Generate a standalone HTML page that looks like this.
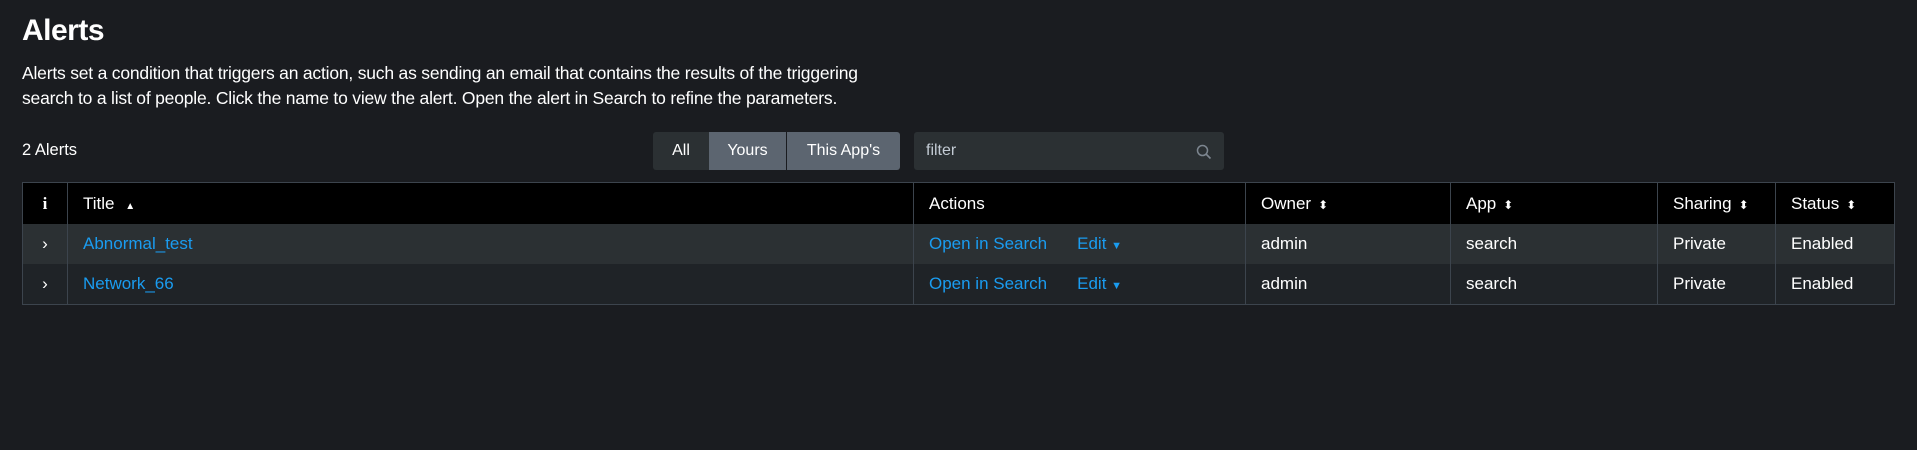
<!DOCTYPE html>
<html><head><meta charset="utf-8"><style>
body{margin:0;width:1917px;height:450px;background:#1a1c20;font-family:"Liberation Sans",sans-serif;color:#fff;overflow:hidden;position:relative}
.a{position:absolute;white-space:nowrap}
h1{position:absolute;left:22px;top:14px;margin:0;font-size:30px;font-weight:bold;letter-spacing:-0.5px}
.desc{left:22px;top:61px;font-size:17.5px;line-height:25px;letter-spacing:-0.2px}
.btn{position:absolute;top:132px;height:38px;line-height:38px;font-size:16px;text-align:center}
table{position:absolute;left:22px;top:182px;width:1873px;border-collapse:collapse;table-layout:fixed;font-size:17px;border:1px solid #3c444d}
td,th{padding:0 0 0 15px;text-align:left;font-weight:normal;height:40px;border-left:1px solid #3c444d;white-space:nowrap;overflow:hidden}
th{background:#000;height:41px}
tr.r1 td{background:#2b3033}
tr.r2 td{background:#1f2327}
a{color:#1a9cf0;text-decoration:none}
.s{font-size:12px;margin-left:7px}
</style></head><body>
<h1>Alerts</h1>
<div class="a desc">Alerts set a condition that triggers an action, such as sending an email that contains the results of the triggering<br>search to a list of people. Click the name to view the alert. Open the alert in Search to refine the parameters.</div>
<div class="a" style="left:22px;top:141px;font-size:16.5px">2 Alerts</div>
<div class="btn" style="left:653px;width:56px;background:#2b3033;border-radius:3px 0 0 3px">All</div>
<div class="btn" style="left:709px;width:77px;background:#5c6570">Yours</div>
<div class="btn" style="left:787px;width:113px;background:#5c6570;border-radius:0 3px 3px 0">This App's</div>
<div class="btn" style="left:914px;width:310px;background:#2b3033;border-radius:3px;text-align:left;color:#c3cbd4"><span style="margin-left:12px">filter</span>
<svg style="position:absolute;right:12px;top:12px" width="16" height="16" viewBox="0 0 16 16"><circle cx="6.5" cy="6.5" r="5" fill="none" stroke="#7d8690" stroke-width="1.5"/><path d="M10 10l4.5 4.5" stroke="#7d8690" stroke-width="1.6"/></svg></div>
<table>
<colgroup><col style="width:45px"><col style="width:846px"><col style="width:332px"><col style="width:205px"><col style="width:207px"><col style="width:118px"><col style="width:119px"></colgroup>
<tr><th style="padding:0;text-align:center;border-left:none;font-weight:bold;font-family:'Liberation Serif',serif">i</th><th>Title <span style="font-size:10px;margin-left:6px">▲</span></th><th>Actions</th><th>Owner<span class="s">⬍</span></th><th>App<span class="s">⬍</span></th><th>Sharing<span class="s">⬍</span></th><th>Status<span class="s">⬍</span></th></tr>
<tr class="r1"><td style="padding:0;text-align:center;border-left:none">›</td><td><a>Abnormal_test</a></td><td><a>Open in Search</a><a style="margin-left:30px">Edit <span style="font-size:11px">▼</span></a></td><td>admin</td><td>search</td><td>Private</td><td>Enabled</td></tr>
<tr class="r2"><td style="padding:0;text-align:center;border-left:none">›</td><td><a>Network_66</a></td><td><a>Open in Search</a><a style="margin-left:30px">Edit <span style="font-size:11px">▼</span></a></td><td>admin</td><td>search</td><td>Private</td><td>Enabled</td></tr>
</table>
</body></html>
